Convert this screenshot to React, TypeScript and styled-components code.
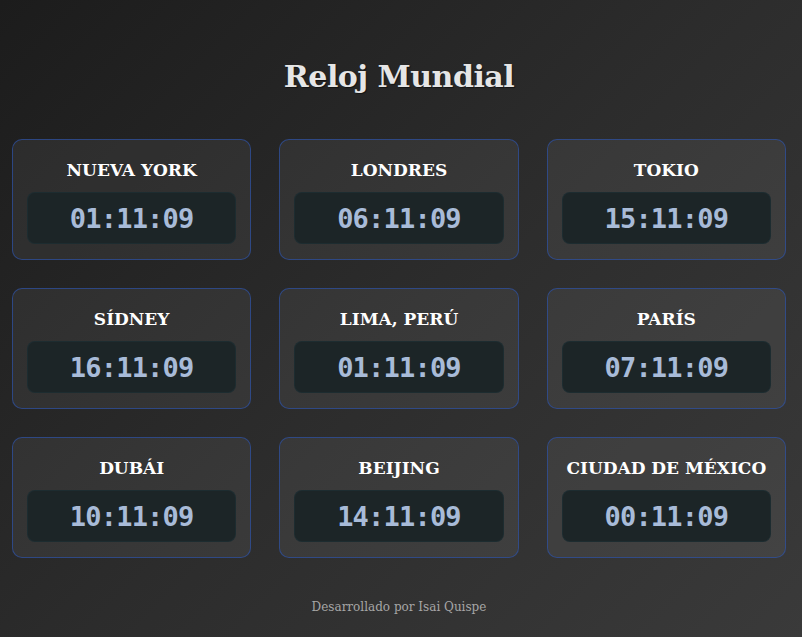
import React from "react";
import styled, { createGlobalStyle } from "styled-components";

const Global = createGlobalStyle`
  html, body { margin: 0; padding: 0; }
  body {
    min-height: 637px;
    background: linear-gradient(135deg, #1c1c1c 0%, #2c2c2c 50%, #3a3a3a 100%);
    font-family: "DejaVu Serif", "Liberation Serif", serif;
  }
`;

const Page = styled.main`
  width: 774px;
  margin-left: 12px;
  padding-top: 56px;
  display: flex;
  flex-direction: column;
  align-items: center;
`;

const Title = styled.h1`
  margin: 0;
  font-family: "DejaVu Serif", serif;
  font-weight: 700;
  font-size: 30px;
  line-height: 42px;
  color: #e6e6e6;
  text-shadow: 1px 1px 1px rgba(0, 0, 0, 0.5);
  letter-spacing: -0.5px;
`;

const Grid = styled.section`
  margin-top: 41px;
  width: 100%;
  display: grid;
  grid-template-columns: repeat(3, 1fr);
  column-gap: 28px;
  row-gap: 28px;
`;

const Card = styled.article`
  box-sizing: border-box;
  height: 121px;
  border: 1px solid rgba(45, 80, 160, 0.75);
  border-radius: 10px;
  background: rgba(255, 255, 255, 0.06);
  padding: 18px 14px 0;
  display: flex;
  flex-direction: column;
  align-items: center;
`;

const City = styled.h2`
  margin: 0;
  font-family: "DejaVu Serif", serif;
  font-weight: 700;
  font-size: 17px;
  line-height: 24px;
  color: #ffffff;
  white-space: nowrap;
`;

const TimeBox = styled.div`
  box-sizing: border-box;
  margin-top: 10px;
  width: 100%;
  height: 52px;
  border-radius: 8px;
  background: #1c2527;
  border: 1px solid rgba(30, 45, 50, 0.9);
  display: flex;
  align-items: center;
  justify-content: center;
`;

const Time = styled.span`
  font-family: "DejaVu Sans Mono", monospace;
  font-weight: 700;
  font-size: 27px;
  letter-spacing: -0.8px;
  color: #a8bbd8;
`;

const Footer = styled.footer`
  margin-top: 42px;
  font-family: "DejaVu Serif", serif;
  font-size: 12px;
  color: #a6a6a6;
`;

const clocks = [
  ["NUEVA YORK", "01:11:09"],
  ["LONDRES", "06:11:09"],
  ["TOKIO", "15:11:09"],
  ["SÍDNEY", "16:11:09"],
  ["LIMA, PERÚ", "01:11:09"],
  ["PARÍS", "07:11:09"],
  ["DUBÁI", "10:11:09"],
  ["BEIJING", "14:11:09"],
  ["CIUDAD DE MÉXICO", "00:11:09"],
];

export default function App() {
  return (
    <>
      <Global />
      <Page>
        <Title>Reloj Mundial</Title>
        <Grid>
          {clocks.map(([city, time]) => (
            <Card key={city}>
              <City>{city}</City>
              <TimeBox>
                <Time>{time}</Time>
              </TimeBox>
            </Card>
          ))}
        </Grid>
        <Footer>Desarrollado por Isai Quispe</Footer>
      </Page>
    </>
  );
}
